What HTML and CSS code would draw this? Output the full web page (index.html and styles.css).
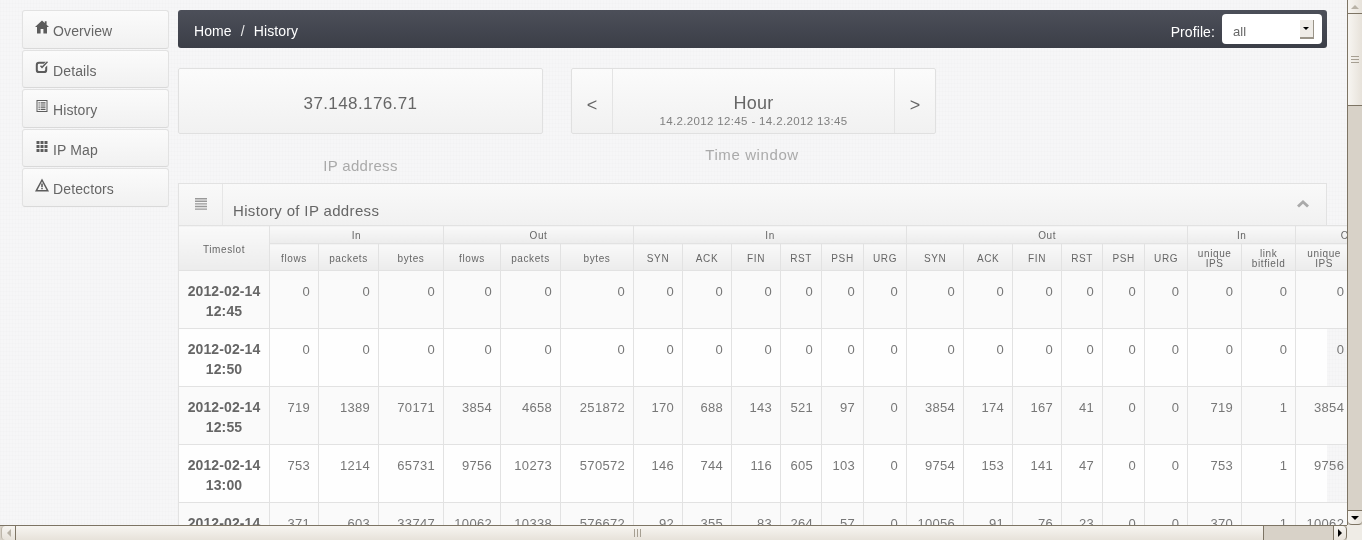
FILE: index.html
```html
<!DOCTYPE html>
<html lang="en">
<head>
<meta charset="utf-8">
<title>History</title>
<link rel="stylesheet" href="styles.css">
</head>
<body>
<div class="app">
  <div class="viewport">
    <div class="page">
      <nav class="side">
        <a class="side-item"><svg class="ico" viewBox="0 0 14 14"><path d="M7 .5 0 7h2v6.500h3.600V9h2.800v4.500H12V7h2l-2.400-2.200V1.200h-1.800v1.900z"/></svg>Overview</a>
        <a class="side-item"><svg class="ico" viewBox="0 0 14 14"><path d="M10.200 7.500v2.300a1.300 1.300 0 0 1-1.300 1.300H4.100a1.300 1.300 0 0 1-1.300-1.300V5a1.300 1.300 0 0 1 1.300-1.300h4.700l2-2H4a3.200 3.200 0 0 0-3.200 3.200v5a3.200 3.200 0 0 0 3.200 3.200h5a3.200 3.200 0 0 0 3.200-3.200V5.500z"/><path d="M5 6.300 7 8.400 13 2.300 12 1.200l-5 5-1-1z"/></svg>Details</a>
        <a class="side-item"><svg class="ico" viewBox="0 0 14 14"><path fill-rule="evenodd" d="M1.500 1h11v12h-11zM2.500 2v10h9V2z"/><path d="M3.500 3.200h1.300v1.200H3.500zM5.600 3.200h4.900v1.200H5.600zM3.500 5.400h1.300v1.200H3.500zM5.600 5.400h4.900v1.200H5.600zM3.500 7.600h1.300v1.200H3.500zM5.600 7.600h4.900v1.200H5.600zM3.500 9.800h1.300V11H3.500zM5.600 9.800h4.900V11H5.600z"/></svg>History</a>
        <a class="side-item"><svg class="ico" viewBox="0 0 14 14"><path d="M1.500 2h3v3h-3zM5.500 2h3v3h-3zM9.500 2h3v3h-3zM1.500 6h3v3h-3zM5.500 6h3v3h-3zM9.500 6h3v3h-3zM1.500 10h3v3h-3zM5.500 10h3v3h-3zM9.500 10h3v3h-3z"/></svg>IP Map</a>
        <a class="side-item"><svg class="ico" viewBox="0 0 14 14"><path fill-rule="evenodd" d="M7 .5 14 13.500H0zM7 3.500 2.500 12h9z"/><path d="M6.200 5.500h1.600v3.500H6.200zM6.200 9.700h1.600v1.500H6.200z"/></svg>Detectors</a>
      </nav>
      <main class="content">
        <header class="bar">
          <div class="crumbs"><span>Home</span><span class="sep">/</span><span>History</span></div>
          <div class="profile">
            <span>Profile:</span>
            <div class="select"><span>all</span><i class="select-btn"></i></div>
          </div>
        </header>
        <section class="stats">
          <div class="stat">
            <div class="box ip">37.148.176.71</div>
            <div class="label label-ip">IP address</div>
          </div>
          <div class="stat">
            <div class="box time">
              <div class="arrow">&lt;</div>
              <div class="window"><div class="window-name">Hour</div><div class="window-range">14.2.2012 12:45 - 14.2.2012 13:45</div></div>
              <div class="arrow">&gt;</div>
            </div>
            <div class="label label-time">Time window</div>
          </div>
        </section>
        <section class="panel">
          <div class="panel-head">
            <div class="panel-icon"><svg class="ico-menu" viewBox="0 0 12 12"><path d="M0 0h12v1.400H0zM0 2.600h12V4H0zM0 5.200h12v1.400H0zM0 7.800h12v1.400H0zM0 10.400h12v1.400H0z"/></svg></div>
            <h2 class="panel-title">History of IP address</h2>
            <svg class="chevron" viewBox="0 0 12 8"><path d="M6 0l6 5.500-2 2L6 3.800 2 7.500l-2-2z"/></svg>
          </div>
          <table class="grid">
            <colgroup>
              <col class="w91"><col class="w49"><col class="w60"><col class="w65"><col class="w57"><col class="w60"><col class="w73">
              <col class="w49"><col class="w49"><col class="w49"><col class="w41"><col class="w42"><col class="w43">
              <col class="w57"><col class="w49"><col class="w49"><col class="w41"><col class="w42"><col class="w43">
              <col class="w54"><col class="w54"><col class="w57"><col class="w51">
            </colgroup>
            <thead>
              <tr class="groups">
                <th rowspan="2" class="timeslot">Timeslot</th>
                <th colspan="3">In</th><th colspan="3">Out</th><th colspan="6">In</th><th colspan="6">Out</th><th colspan="2">In</th><th colspan="2">Out</th>
              </tr>
              <tr class="subs">
                <th>flows</th><th>packets</th><th>bytes</th><th>flows</th><th>packets</th><th>bytes</th>
                <th>SYN</th><th>ACK</th><th>FIN</th><th>RST</th><th>PSH</th><th>URG</th>
                <th>SYN</th><th>ACK</th><th>FIN</th><th>RST</th><th>PSH</th><th>URG</th>
                <th>unique<br>IPS</th><th>link<br>bitfield</th><th>unique<br>IPS</th><th></th>
              </tr>
            </thead>
            <tbody>
              <tr><th>2012-02-14<br>12:45</th><td>0</td><td>0</td><td>0</td><td>0</td><td>0</td><td>0</td><td>0</td><td>0</td><td>0</td><td>0</td><td>0</td><td>0</td><td>0</td><td>0</td><td>0</td><td>0</td><td>0</td><td>0</td><td>0</td><td>0</td><td>0</td><td></td></tr>
              <tr><th>2012-02-14<br>12:50</th><td>0</td><td>0</td><td>0</td><td>0</td><td>0</td><td>0</td><td>0</td><td>0</td><td>0</td><td>0</td><td>0</td><td>0</td><td>0</td><td>0</td><td>0</td><td>0</td><td>0</td><td>0</td><td>0</td><td>0</td><td>0</td><td></td></tr>
              <tr><th>2012-02-14<br>12:55</th><td>719</td><td>1389</td><td>70171</td><td>3854</td><td>4658</td><td>251872</td><td>170</td><td>688</td><td>143</td><td>521</td><td>97</td><td>0</td><td>3854</td><td>174</td><td>167</td><td>41</td><td>0</td><td>0</td><td>719</td><td>1</td><td>3854</td><td></td></tr>
              <tr><th>2012-02-14<br>13:00</th><td>753</td><td>1214</td><td>65731</td><td>9756</td><td>10273</td><td>570572</td><td>146</td><td>744</td><td>116</td><td>605</td><td>103</td><td>0</td><td>9754</td><td>153</td><td>141</td><td>47</td><td>0</td><td>0</td><td>753</td><td>1</td><td>9756</td><td></td></tr>
              <tr><th>2012-02-14</th><td>371</td><td>603</td><td>33747</td><td>10062</td><td>10338</td><td>576672</td><td>92</td><td>355</td><td>83</td><td>264</td><td>57</td><td>0</td><td>10056</td><td>91</td><td>76</td><td>23</td><td>0</td><td>0</td><td>370</td><td>1</td><td>10062</td><td></td></tr>
            </tbody>
          </table>
        </section>
      </main>
    </div>
  </div>
  <div class="vbar">
    <div class="sb-btn sb-v"><i class="tri tri-up tri-off"></i></div>
    <div class="thumb-v"><i class="grip-v"></i></div>
    <div class="trough"></div>
    <div class="sb-btn sb-v sb-v-end"><i class="tri tri-down"></i></div>
  </div>
  <div class="hbar">
    <div class="sb-btn sb-h"><i class="tri tri-left tri-off"></i></div>
    <div class="thumb-h"><i class="grip-h"></i></div>
    <div class="trough"></div>
    <div class="sb-btn sb-h sb-h-end"><i class="tri tri-right"></i></div>
  </div>
  <div class="corner"></div>
</div>
</body>
</html>
```
FILE: styles.css
```css
* { box-sizing: border-box; }
html, body { margin: 0; height: 100%; overflow: hidden; }
body {
  font-family: "Liberation Sans", Arial, sans-serif;
  color: #666;
  background-color: #f6f6f7;
  background-image:
    repeating-linear-gradient(0deg, rgba(0,0,0,.006) 0 1px, transparent 1px 4px),
    repeating-linear-gradient(90deg, rgba(0,0,0,.006) 0 1px, transparent 1px 3px);
}
.app {
  display: grid;
  grid-template-columns: 1347px 15px;
  grid-template-rows: 525px 15px;
  height: 540px;
}
.viewport { overflow: hidden; }
.page { display: flex; gap: 9px; padding: 10px 0 0 22px; width: 1400px; will-change: transform; }

/* side nav */
.side { width: 147px; flex: none; display: flex; flex-direction: column; gap: 1px; }
.side-item {
  height: 38.500px;
  display: flex;
  align-items: flex-start;
  padding: 7px 0 0 12px;
  font-size: 14px;
  line-height: 26px;
  letter-spacing: .12px;
  color: #666;
  background: linear-gradient(#fbfbfb, #f1f1f1);
  border: 1px solid #e2e2e2;
  border-bottom-color: #d9d9d9;
  border-radius: 3px;
}
.ico { width: 14px; height: 14px; fill: #5c5c5c; margin: 2px 4px 0 0; flex: none; }

/* top bar */
.content { width: 1149px; flex: none; }
.bar {
  height: 38px;
  display: flex;
  justify-content: space-between;
  align-items: center;
  padding: 0 5px 0 16px;
  border-radius: 3px;
  background: linear-gradient(#4c4f59, #3b3e47);
  color: #fff;
  font-size: 14px;
  letter-spacing: .1px;
}
.crumbs { display: flex; padding-top: 4px; }
.sep { margin: 0 9px; color: #e8e8e8; }
.profile { display: flex; align-items: center; gap: 7px; }
.profile > span { padding-top: 5px; }
.select {
  width: 100px;
  height: 30px;
  display: flex;
  justify-content: space-between;
  padding: 7px 8px 0 11px;
  background: #fff;
  border-radius: 4px;
  color: #666;
  font-size: 13px;
  line-height: 22px;
}
.select-btn {
  position: relative;
  width: 14px;
  height: 19px;
  margin-top: -1px;
  background: #efece7;
  border-right: 1px solid #9a9488;
  border-bottom: 2px solid #9a9488;
}
.select-btn::after {
  content: "";
  position: absolute;
  left: 3px;
  top: 7px;
  border: 3px solid transparent;
  border-top: 3px solid #000;
  border-bottom: 0;
}

/* stats */
.stats { display: flex; gap: 28px; margin-top: 20px; height: 115px; }
.stat { width: 365px; text-align: center; }
.box {
  height: 66px;
  background: linear-gradient(#fbfbfb, #f1f1f1);
  border: 1px solid #e0e0e0;
  border-radius: 2px;
}
.ip { font-size: 17px; line-height: 69px; letter-spacing: .4px; color: #666; }
.time { display: flex; }
.arrow { width: 40px; padding-top: 25px; font-size: 18px; line-height: 22px; flex: none; }
.window { flex: 1; border-left: 1px solid #e4e4e4; border-right: 1px solid #e4e4e4; padding-top: 23px; }
.window-name { font-size: 18px; line-height: 22px; letter-spacing: .2px; }
.window-range { font-size: 11.500px; line-height: 14px; letter-spacing: .35px; color: #808080; }
.label { font-size: 15px; letter-spacing: .3px; color: #aaa; line-height: 20px; }
.label-ip { margin-top: 22px; }
.label-time { margin-top: 11px; letter-spacing: .6px; padding-right: 3px; }

/* panel */
.panel { background: #fefefe; }
.panel-head {
  height: 42px;
  display: flex;
  background: linear-gradient(#f9f9f9, #f1f1f1);
  border: 1px solid #e2e2e2;
  border-bottom: 0;
}
.panel-icon { width: 44px; flex: none; border-right: 1px solid #e6e6e6; padding: 14px 0 0 16px; }
.ico-menu { display: block; width: 12px; height: 12px; fill: #999; }
.panel-title {
  flex: 1;
  margin: 0;
  padding: 15px 0 0 10px;
  font-size: 15px;
  font-weight: 400;
  line-height: 24px;
  letter-spacing: .35px;
  color: #666;
}
.chevron { width: 12px; height: 8px; fill: #aaa; margin: 16px 17px 0 0; flex: none; }

/* table */
.grid { table-layout: fixed; border-collapse: collapse; width: 1225px; font-size: 13px; letter-spacing: .3px; }
.grid th, .grid td { border: 1px solid #e2e2e2; padding: 0; }
.grid thead th {
  font-size: 10px;
  font-weight: 400;
  line-height: 10px;
  letter-spacing: .6px;
  color: #666;
  background: linear-gradient(#f9f9f9, #ececec);
  text-align: center;
}
.groups th { height: 18px; padding-top: 2px; }
.groups .timeslot { padding-top: 4px; }
.subs th { height: 27px; padding-top: 3px; }
.grid tbody tr { height: 58px; }
.grid tbody tr:nth-child(odd) { background: #fafafa; }
.grid tbody th {
  font-size: 14px;
  line-height: 20px;
  font-weight: 700;
  letter-spacing: .1px;
  text-align: center;
  vertical-align: top;
  padding-top: 10px;
}
.grid td { text-align: right; vertical-align: top; padding: 11px 8px 0 0; line-height: 20px; color: #777; }
.w91 { width: 91px; } .w49 { width: 49px; } .w60 { width: 60px; } .w65 { width: 65px; }
.w57 { width: 57px; } .w73 { width: 73px; } .w41 { width: 41px; } .w42 { width: 42px; }
.w43 { width: 43px; } .w54 { width: 54px; } .w51 { width: 51px; }

/* scrollbars */
.vbar, .hbar { display: flex; background: #d8d2c8; }
.vbar { flex-direction: column; border-left: 1px solid #7d7464; }
.hbar { border-top: 1px solid #7d7464; }
.trough { flex: 1; }
.corner { background: #efece6; }
.sb-btn, .thumb-v, .thumb-h { background: linear-gradient(90deg, #f7f5f1, #e7e2da); display: flex; align-items: center; justify-content: center; flex: none; }
.thumb-h, .sb-h { background: linear-gradient(#f7f5f1, #e7e2da); }
.sb-v { height: 14px; border-bottom: 1px solid #7d7464; }
.sb-v-end { height: 15px; border: 1px solid #7d7464; border-left: 0; border-right: 0; border-radius: 0 0 4px 4px; }
.thumb-v { height: 92px; border-bottom: 1px solid #7d7464; }
.sb-h { width: 15px; margin-left: 1px; border-right: 1px solid #7d7464; border-left: 1px solid #bdb6aa; border-radius: 4px 0 0 4px; }
.sb-h-end { width: 14px; margin-left: 0; border-left: 1px solid #7d7464; border-right: 1px solid #7d7464; border-radius: 0 4px 4px 0; }
.thumb-h { width: 1248px; padding-right: 4px; border-right: 1px solid #7d7464; }
.grip-v { width: 8px; height: 7px; border-top: 1px solid #a69f92; border-bottom: 1px solid #a69f92; background: linear-gradient(transparent 2px, #a69f92 2px, #a69f92 3px, transparent 3px); }
.grip-h { width: 7px; height: 8px; border-left: 1px solid #a69f92; border-right: 1px solid #a69f92; background: linear-gradient(90deg, transparent 2px, #a69f92 2px, #a69f92 3px, transparent 3px); }
.tri { width: 0; height: 0; border: 4px solid transparent; }
.tri-up { border-top: 0; border-bottom: 4px solid #000; }
.tri-down { border-bottom: 0; border-top: 4px solid #000; }
.tri-left { border-left: 0; border-right: 4px solid #000; }
.tri-right { border-right: 0; border-left: 4px solid #000; }
.tri-off.tri-up { border-bottom-color: #b8b2a6; }
.tri-off.tri-left { border-right-color: #b8b2a6; }
```
